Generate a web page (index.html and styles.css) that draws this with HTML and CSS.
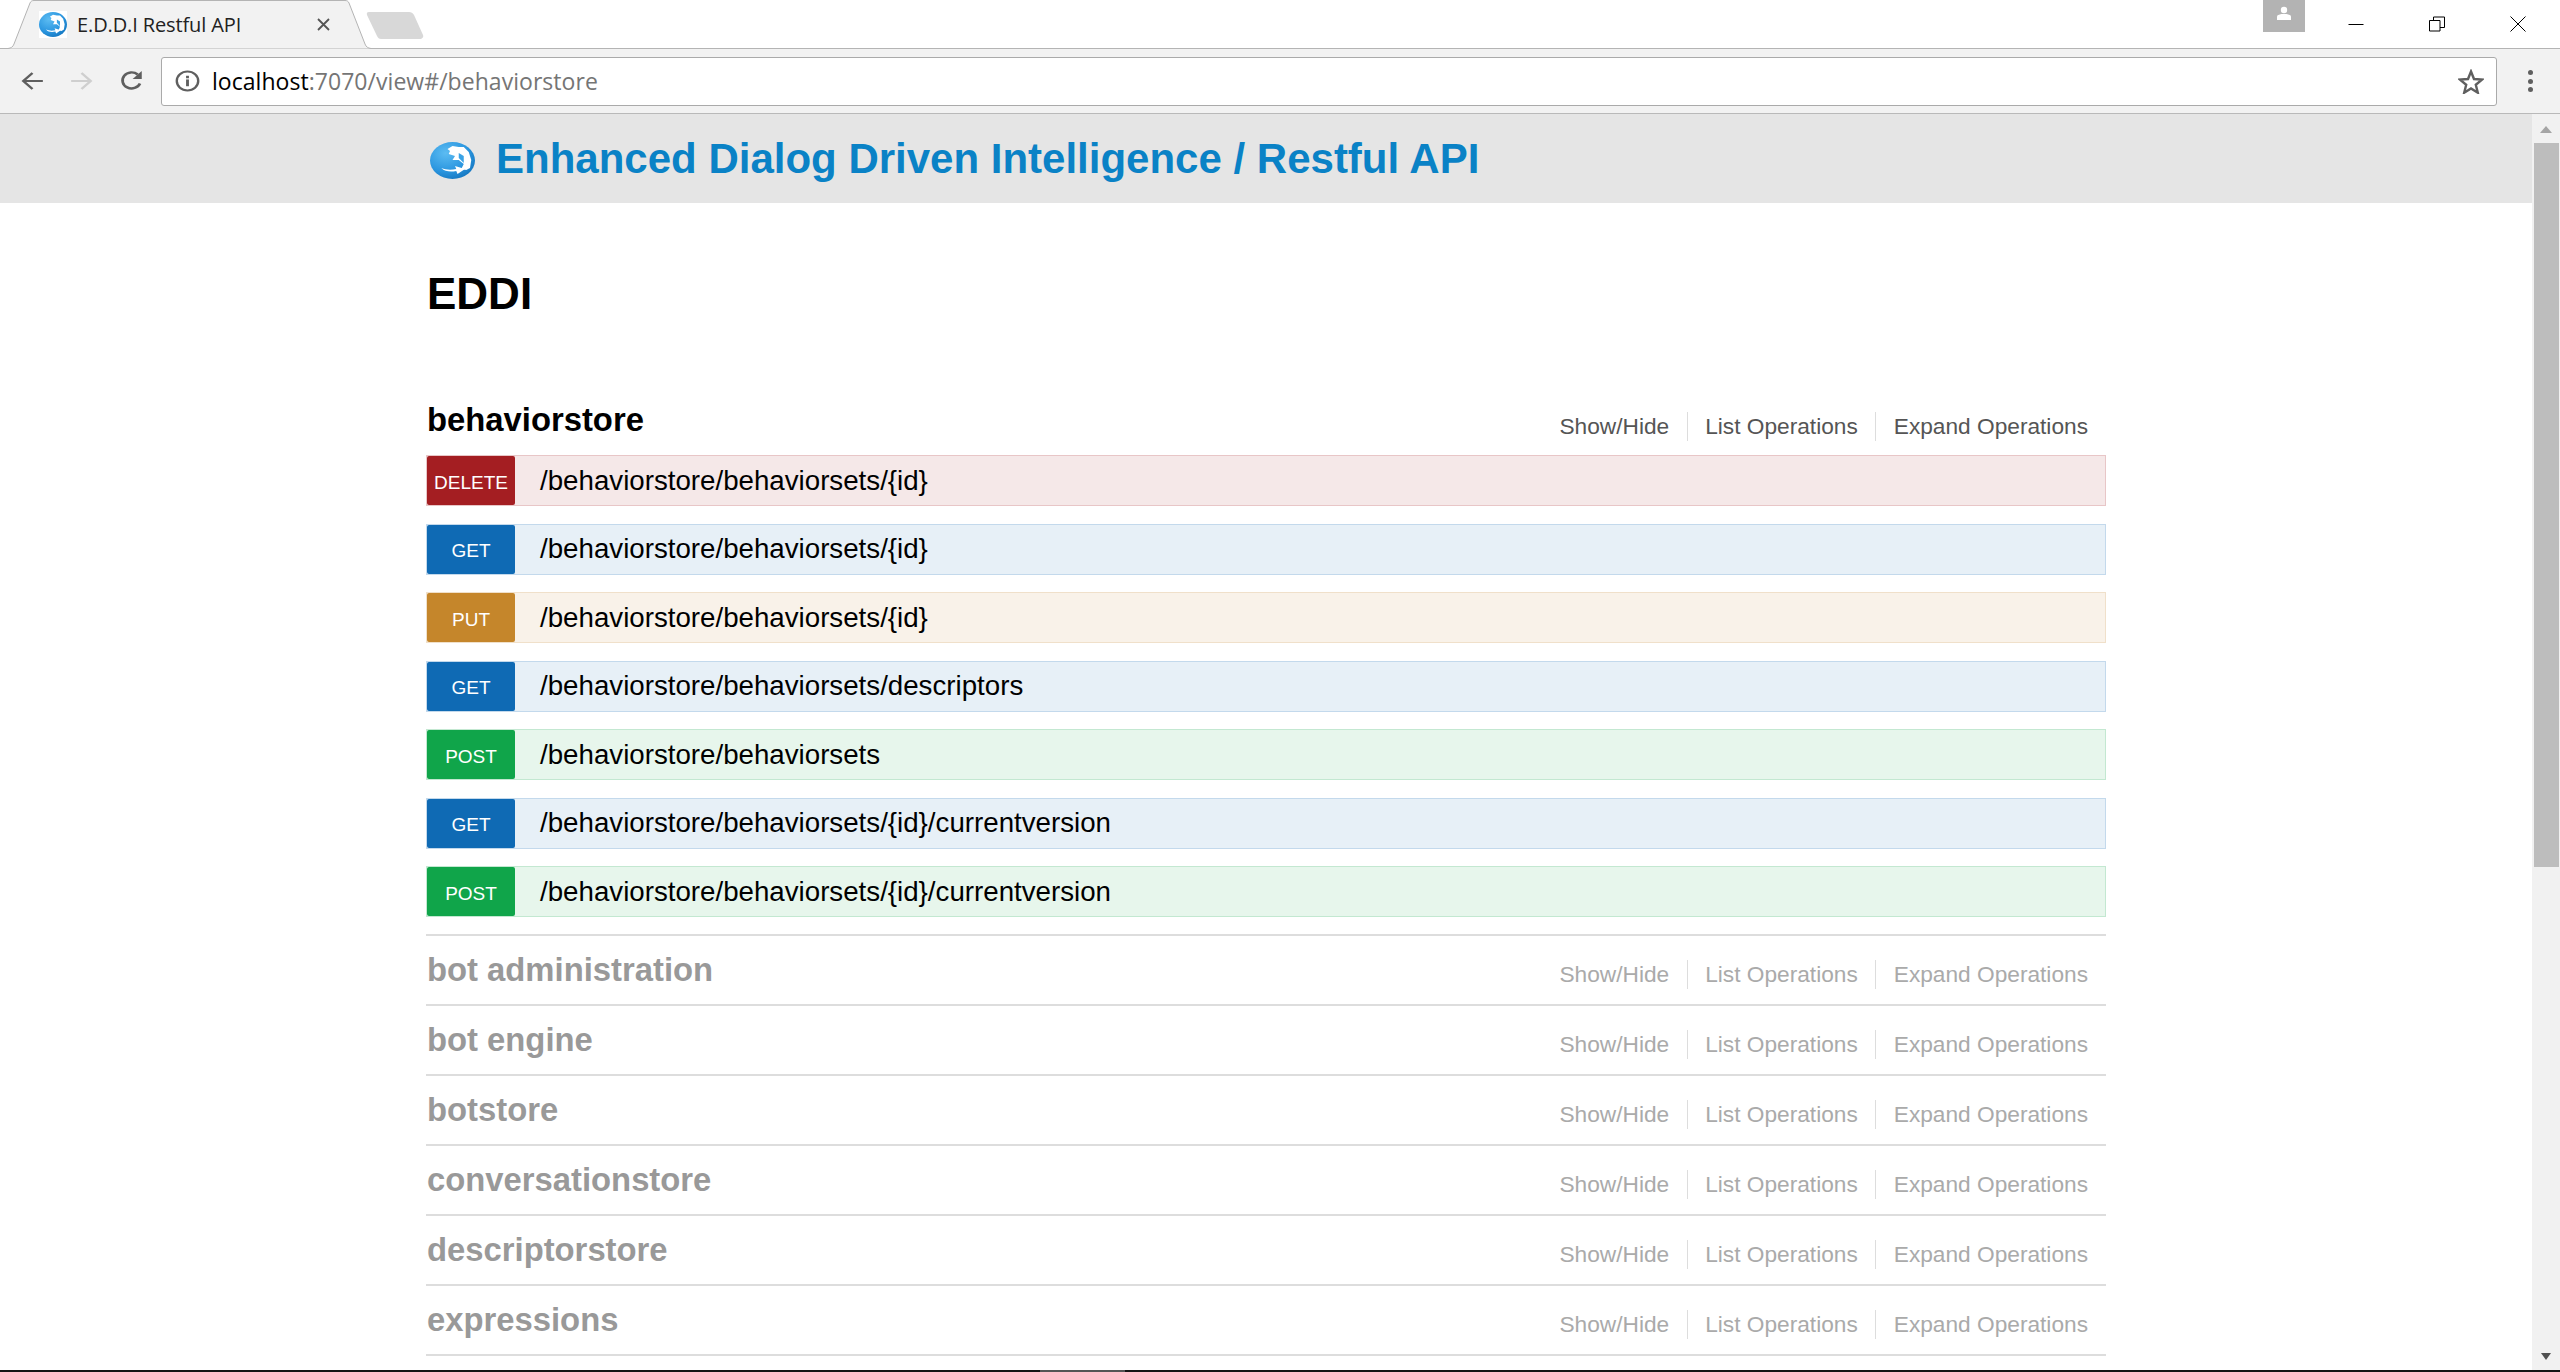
FILE: index.html
```html
<!DOCTYPE html>
<html lang="en">
<head>
<meta charset="utf-8">
<title>E.D.D.I Restful API</title>
<link rel="stylesheet" href="styles.css">
</head>
<body>
<svg class="defs" width="0" height="0" aria-hidden="true">
  <defs>
    <radialGradient id="globeFill" cx="35%" cy="30%" r="80%">
      <stop offset="0" stop-color="#5cbcf2"/>
      <stop offset="0.6" stop-color="#2c97e0"/>
      <stop offset="1" stop-color="#1273bd"/>
    </radialGradient>
    <symbol id="globe" viewBox="0 0 36 37" preserveAspectRatio="none">
      <ellipse cx="18" cy="18.5" rx="18" ry="18.5" fill="url(#globeFill)"/>
      <path d="M14 7l4-3 5 1 4 0 4 5 2 8-1 8-3 2-4-1 2-5-4-4-5 0 2-4-5-2 1-3z" fill="#fff"/>
      <path d="M23 11l4 3 0 7-4-5z" fill="#3aa3e6"/>
      <path d="M9 26c4 2 8 2 12 1l-1-3 8 3-6 5-1-3c-4 1-9 1-12-3z" fill="#fff"/>
    </symbol>
  </defs>
</svg>

<header class="tabstrip">
  <div class="tab">
    <svg class="tab-shape" width="364" height="49" viewBox="0 0 364 49"><path d="M0 48.500C3 48 5 47 6 44L22 3C23 1 24 .5 26 .5H337C339 .5 340 1 341 3L357 44C358 47 360 48 363 48.500" fill="#f2f2f2" stroke="#b4b4b4"/></svg>
    <svg class="tab-icon" width="28" height="27" viewBox="0 0 28 27"><rect width="28" height="27" fill="#fff"/><use href="#globe" x="0" y="1" width="28" height="25"/></svg>
    <span class="tab-title">E.D.D.I Restful API</span>
    <svg class="tab-close" width="13" height="13" viewBox="0 0 13 13"><path d="M1 1l11 11M12 1L1 12" stroke="#555" stroke-width="1.800" fill="none"/></svg>
  </div>
  <svg class="newtab" width="58" height="29" viewBox="0 0 58 29" preserveAspectRatio="none"><path d="M3 1H43C45 1 47 2 48 4L57 24C58 26 56 28 54 28H15C13 28 12 27 11 25L1 4C.5 2 1 1 3 1z" fill="#d8d8d8"/></svg>
  <div class="window">
    <div class="profile"><svg width="16" height="16" viewBox="0 0 16 16"><circle cx="8" cy="4" r="3.200" fill="#fff"/><path d="M1 14V10.500C1 9 3 8.500 5.500 8H10.500C13 8.500 15 9 15 10.500V14z" fill="#fff"/></svg></div>
    <div class="ctl"><svg width="16" height="16" viewBox="0 0 16 16"><path d="M.5 8.500h15" stroke="#000" fill="none"/></svg></div>
    <div class="ctl"><svg width="16" height="16" viewBox="0 0 16 16"><path d="M.5 4.500h10.500v10.500H.5zM4.500 4.500V1h11v10.500H11" stroke="#000" fill="none"/></svg></div>
    <div class="ctl"><svg width="16" height="16" viewBox="0 0 16 16"><path d="M.5.5l15 15M15.500.5l-15 15" stroke="#000" fill="none"/></svg></div>
  </div>
</header>

<nav class="toolbar">
  <div class="nav"><svg width="23" height="20" viewBox="0 0 20 20" preserveAspectRatio="none"><path d="M19 10H2M10 2l-8 8 8 8" stroke="#5f5f5f" stroke-width="2.200" fill="none"/></svg></div>
  <div class="nav nav-fwd"><svg width="23" height="20" viewBox="0 0 20 20" preserveAspectRatio="none"><path d="M1 10h17M10 2l8 8-8 8" stroke="#cfcfcf" stroke-width="2.200" fill="none"/></svg></div>
  <div class="nav nav-reload"><svg width="25" height="22" viewBox="0 0 22 22" preserveAspectRatio="none"><path d="M18.500 13.500A8 8 0 1 1 16.500 4.500" stroke="#5f5f5f" stroke-width="2.400" fill="none"/><path d="M20 1v8h-8z" fill="#5f5f5f"/></svg></div>
  <div class="omnibox">
    <svg class="info" width="25" height="22" viewBox="0 0 21 21" preserveAspectRatio="none"><circle cx="10.500" cy="10.500" r="9" stroke="#5f5f5f" stroke-width="2" fill="none"/><rect x="9.300" y="9" width="2.400" height="6.500" fill="#5f5f5f"/><rect x="9.300" y="5.500" width="2.400" height="2.400" fill="#5f5f5f"/></svg>
    <span class="url"><span class="url-host">localhost</span>:7070/view#/behaviorstore</span>
    <svg class="star" width="26" height="25" viewBox="0 0 26 25"><path d="M13 2.500l3 7.500 8 .6-6.200 5.200 2 7.900L13 19.400l-6.800 4.300 2-7.900L2 10.600l8-.6z" stroke="#5f5f5f" stroke-width="2.400" fill="none"/></svg>
  </div>
  <div class="menu"><i></i><i></i><i></i></div>
</nav>

<div class="viewport">
  <main class="page">
    <div class="banner">
      <div class="banner-in">
        <svg class="logo" width="45" height="37"><use href="#globe" width="45" height="37"/></svg>
        <span class="brand">Enhanced Dialog Driven Intelligence / Restful API</span>
      </div>
    </div>
    <div class="content">
      <h1 class="api-title">EDDI</h1>

      <section class="res res-open">
        <div class="res-head">
          <h2 class="res-name">behaviorstore</h2>
          <ul class="ops"><li>Show/Hide</li><li>List Operations</li><li>Expand Operations</li></ul>
        </div>
        <div class="ep ep-delete"><span class="verb">DELETE</span><span class="path">/behaviorstore/behaviorsets/{id}</span></div>
        <div class="ep ep-get"><span class="verb">GET</span><span class="path">/behaviorstore/behaviorsets/{id}</span></div>
        <div class="ep ep-put"><span class="verb">PUT</span><span class="path">/behaviorstore/behaviorsets/{id}</span></div>
        <div class="ep ep-get"><span class="verb">GET</span><span class="path">/behaviorstore/behaviorsets/descriptors</span></div>
        <div class="ep ep-post"><span class="verb">POST</span><span class="path">/behaviorstore/behaviorsets</span></div>
        <div class="ep ep-get"><span class="verb">GET</span><span class="path">/behaviorstore/behaviorsets/{id}/currentversion</span></div>
        <div class="ep ep-post"><span class="verb">POST</span><span class="path">/behaviorstore/behaviorsets/{id}/currentversion</span></div>
      </section>

      <section class="res"><div class="res-head"><h2 class="res-name">bot administration</h2><ul class="ops"><li>Show/Hide</li><li>List Operations</li><li>Expand Operations</li></ul></div></section>
      <section class="res"><div class="res-head"><h2 class="res-name">bot engine</h2><ul class="ops"><li>Show/Hide</li><li>List Operations</li><li>Expand Operations</li></ul></div></section>
      <section class="res"><div class="res-head"><h2 class="res-name">botstore</h2><ul class="ops"><li>Show/Hide</li><li>List Operations</li><li>Expand Operations</li></ul></div></section>
      <section class="res"><div class="res-head"><h2 class="res-name">conversationstore</h2><ul class="ops"><li>Show/Hide</li><li>List Operations</li><li>Expand Operations</li></ul></div></section>
      <section class="res"><div class="res-head"><h2 class="res-name">descriptorstore</h2><ul class="ops"><li>Show/Hide</li><li>List Operations</li><li>Expand Operations</li></ul></div></section>
      <section class="res"><div class="res-head"><h2 class="res-name">expressions</h2><ul class="ops"><li>Show/Hide</li><li>List Operations</li><li>Expand Operations</li></ul></div></section>
    </div>
  </main>
  <aside class="scrollbar">
    <div class="arrow-up"></div>
    <div class="thumb"></div>
    <div class="arrow-down"></div>
  </aside>
</div>
<footer class="taskbar"><div class="task-seg"></div></footer>
</body>
</html>
```

FILE: styles.css
```css
* { box-sizing: border-box; }
html, body { margin: 0; height: 100%; }
body {
  width: 2560px;
  height: 1372px;
  overflow: hidden;
  display: flex;
  flex-direction: column;
  background: #fff;
  font-family: "Liberation Sans", Arial, sans-serif;
}
.defs { display: block; height: 0; }

/* browser chrome */
.tabstrip {
  height: 49px;
  flex: none;
  display: flex;
  align-items: flex-start;
  border-bottom: 1px solid #b4b4b4;
  background: #fff;
}
.tab {
  position: relative;
  width: 362px;
  height: 49px;
  margin-left: 8px;
  padding-left: 31px;
  display: flex;
  align-items: center;
  flex: none;
}
.tab-shape { position: absolute; left: 0; top: 0; }
.tab-icon, .tab-title, .tab-close { position: relative; }
.tab-icon { flex: none; }
.tab-title {
  margin-left: 10px;
  font: 20px "Open Sans", sans-serif;
  letter-spacing: -0.12px;
  color: #222;
  white-space: nowrap;
  width: 164px;
}
.tab-close { margin-left: 76px; flex: none; }
.newtab { flex: none; margin: 11px 0 0 -4px; }
.window { margin-left: auto; margin-right: 2px; display: flex; align-items: flex-start; }
.profile {
  width: 42px;
  height: 32px;
  margin-right: 10px;
  background: #b3b3b3;
  display: flex;
  align-items: center;
  justify-content: center;
  padding-bottom: 4px;
}
.ctl { width: 81px; height: 48px; display: flex; align-items: center; justify-content: center; }

.toolbar {
  height: 65px;
  flex: none;
  display: flex;
  align-items: center;
  padding-left: 13px;
  background: #f2f2f2;
  border-bottom: 1px solid #b9b9b9;
}
.nav { width: 38px; height: 38px; flex: none; display: flex; align-items: center; justify-content: center; }
.nav-fwd { margin-left: 11px; }
.nav-reload { margin-left: 12px; }
.omnibox {
  flex: 1;
  height: 49px;
  margin-left: 11px;
  display: flex;
  align-items: center;
  padding: 0 12px 0 13px;
  background: #fff;
  border: 1px solid #aaa;
  border-radius: 3px;
}
.info { flex: none; }
.url {
  margin-left: 12px;
  font: 23px "Open Sans", sans-serif;
  letter-spacing: 0.04px;
  color: #757575;
  white-space: nowrap;
}
.url-host { color: #000; }
.star { margin-left: auto; flex: none; }
.menu { width: 63px; flex: none; display: flex; flex-direction: column; align-items: center; gap: 3.500px; padding-left: 4px; }
.menu i { display: block; width: 5px; height: 5px; border-radius: 50%; background: #5f5f5f; }

/* page viewport */
.viewport { flex: 1; min-height: 0; display: flex; }
.page { flex: 1; min-width: 0; overflow: hidden; }
.banner { height: 89px; background: #e5e5e5; }
.banner-in {
  margin-left: 430px;
  height: 100%;
  display: flex;
  align-items: center;
  gap: 21px;
}
.logo { flex: none; margin-top: 3px; }
.brand { font-size: 42px; font-weight: 700; color: #0a82c6; white-space: nowrap; }

.content { width: 1680px; margin-left: 426px; }
.api-title { margin: 0; padding: 66px 0 0 1px; height: 203px; font-size: 44px; line-height: 50px; font-weight: 700; color: #000; }

.res { border-bottom: 2px solid #ddd; height: 70px; }
.res-open { height: auto; padding-bottom: 17px; }
.res-head { display: flex; justify-content: space-between; height: 68px; align-items: center; padding: 0 18px 0 1px; }
.res-open .res-head { height: 49px; }
.res-name { margin: 0; font-size: 32.800px; line-height: 40px; font-weight: 700; color: #999; white-space: nowrap; }
.res-open .res-name { color: #000; margin-top: -22px; }
.ops { list-style: none; margin: 8px 0 0; padding: 0; display: flex; color: #aaa; font-size: 22.700px; align-items: center; }
.ops li { padding: 0 17.500px; height: 29px; line-height: 29px; border-right: 1px solid #ddd; white-space: nowrap; }
.ops li:last-child { border-right: 0; padding-right: 0; }
.res-open .ops { color: #555; margin-top: -9px; }

.ep { display: flex; align-items: center; height: 51px; margin-bottom: 17.500px; border: 1px solid; }
.ep:last-child { margin-bottom: 0; }
.verb {
  flex: none;
  width: 88px;
  height: 49px;
  display: flex;
  align-items: center;
  justify-content: center;
  padding-top: 4px;
  color: #fff;
  font-size: 19px;
  border-radius: 2px;
}
.path { margin-left: 25px; font-size: 27.700px; color: #000; white-space: nowrap; }
.ep-delete { background: #f5e8e8; border-color: #e8c6c7; }
.ep-delete .verb { background: #a41e22; }
.ep-get { background: #e7f0f7; border-color: #c3d9ec; }
.ep-get .verb { background: #0f6ab4; }
.ep-put { background: #f9f2e9; border-color: #f0e0ca; }
.ep-put .verb { background: #c5862b; }
.ep-post { background: #e7f6ec; border-color: #c3e8d1; }
.ep-post .verb { background: #10a54a; }

/* scrollbar */
.scrollbar { width: 28px; flex: none; background: #f1f1f1; display: flex; flex-direction: column; align-items: center; padding: 12px 0 10px; }
.arrow-up { width: 0; height: 0; border: 6.500px solid transparent; border-top: 0; border-bottom: 7px solid #a5a5a5; }
.thumb { width: 25px; height: 724px; margin-top: 10px; background: #bdbdbd; }
.arrow-down { width: 0; height: 0; margin-top: auto; border: 5.500px solid transparent; border-bottom: 0; border-top: 7px solid #505050; }

.taskbar { height: 2px; flex: none; background: #141414; display: flex; }
.task-seg { width: 85px; margin-left: 1040px; background: #555; }
```
